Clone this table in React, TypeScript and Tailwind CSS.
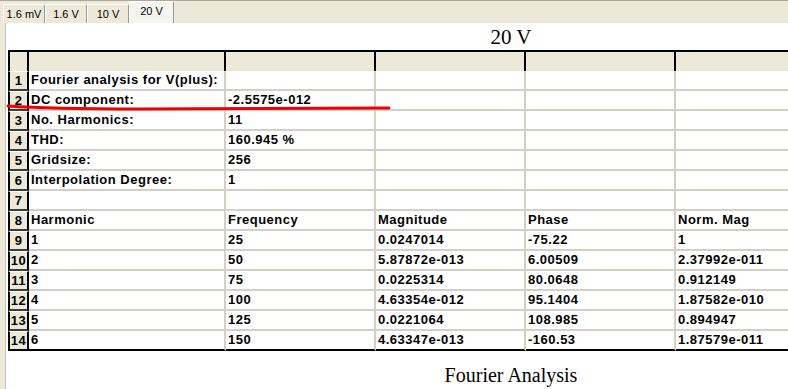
import React from "react";

const tabs = ["1.6 mV", "1.6 V", "10 V", "20 V"];

const rows: string[][] = [
    ["Fourier analysis for V(plus):", "", "", "", ""],
    ["DC component:", "-2.5575e-012", "", "", ""],
    ["No. Harmonics:", "11", "", "", ""],
    ["THD:", "160.945 %", "", "", ""],
    ["Gridsize:", "256", "", "", ""],
    ["Interpolation Degree:", "1", "", "", ""],
    ["", "", "", "", ""],
    ["Harmonic", "Frequency", "Magnitude", "Phase", "Norm. Mag"],
    ["1", "25", "0.0247014", "-75.22", "1"],
    ["2", "50", "5.87872e-013", "6.00509", "2.37992e-011"],
    ["3", "75", "0.0225314", "80.0648", "0.912149"],
    ["4", "100", "4.63354e-012", "95.1404", "1.87582e-010"],
    ["5", "125", "0.0221064", "108.985", "0.894947"],
    ["6", "150", "4.63347e-013", "-160.53", "1.87579e-011"],
];

const colWidths = ["w-[197px]", "w-[150px]", "w-[150px]", "w-[150px]", "w-[150px]"];

const TabBar = () => (
    <div className="h-[23px] shrink-0 flex items-end pl-[3px] border-t border-[#aca899]">
        {tabs.map((tab, i) =>
            i === tabs.length - 1 ? (
                <div
                    key={tab}
                    className="h-[22px] w-[45px] flex justify-center pt-[3px] bg-[#f5f4ef] border-t border-l border-white border-r border-r-[#919b9c] rounded-t-[2px] text-[11px] leading-[13px]"
                >
                    {tab}
                </div>
            ) : (
                <div
                    key={tab}
                    className="h-[19px] w-[42px] flex items-center justify-center bg-[#ece9d8] border-t border-l border-white border-r border-r-[#919b9c] rounded-t-[2px] text-[11px]"
                >
                    {tab}
                </div>
            )
        )}
    </div>
);

const GridRow = ({ num, cells, last }: { num: number; cells: string[]; last: boolean }) => (
    <div className="flex h-[20px]">
        <div
            className={
                "w-[21px] shrink-0 flex items-center justify-center bg-[#ece9d8] border-l-2 border-r-2 border-black border-t border-t-white border-b-2 " +
                (last ? "border-b-black" : "border-b-[#3c3c3c]")
            }
        >
            {num}
        </div>
        {cells.map((c, i) => (
            <div
                key={i}
                className={
                    colWidths[i] +
                    " shrink-0 flex items-center pl-[2px] whitespace-nowrap overflow-hidden border-r-2 border-r-[#d4d0c8] border-b-2 " +
                    (last ? "border-b-black" : "border-b-[#d4d0c8]")
                }
            >
                {c}
            </div>
        ))}
    </div>
);

const Grid = () => (
    <div
        className="ml-[2px] w-[818px] shrink-0 flex flex-col font-bold text-[13px] tracking-[0.5px] text-black"
        style={{ fontFamily: '"Liberation Sans", Arial, sans-serif' }}
    >
        <div className="flex h-[21px] border-t-2 border-black">
            <div className="w-[21px] shrink-0 bg-[#ece9d8] border-l-2 border-r-2 border-black" />
            {colWidths.map((w, i) => (
                <div key={i} className={w + " shrink-0 bg-[#ece9d8] border-r-2 border-black"} />
            ))}
        </div>
        {rows.map((r, i) => (
            <GridRow key={i} num={i + 1} cells={r} last={i === rows.length - 1} />
        ))}
    </div>
);

const RedMark = () => (
    <svg className="absolute left-0 top-0 pointer-events-none" width="788" height="389">
        <path
            d="M8,106 Q50,109 140,109 L389,108"
            fill="none"
            stroke="#f00000"
            strokeWidth="3"
            strokeLinecap="round"
        />
    </svg>
);

export default function App() {
    return (
        <div
            className="relative w-[788px] h-[389px] overflow-hidden bg-[#ece9d8] flex flex-col text-black"
            style={{ fontFamily: '"Liberation Sans", Arial, sans-serif' }}
        >
            <TabBar />
            <div className="flex-1 ml-[5px] bg-white border-l border-[#c4c1b4] flex flex-col overflow-hidden">
                <div
                    className="w-[1010px] shrink-0 h-[27px] text-center text-[21px] leading-[26px] pt-[1px]"
                    style={{ fontFamily: '"Liberation Serif", "Times New Roman", serif' }}
                >
                    20 V
                </div>
                <Grid />
                <div
                    className="w-[1010px] shrink-0 mt-[11px] text-center text-[20px] leading-[26px]"
                    style={{ fontFamily: '"Liberation Serif", "Times New Roman", serif' }}
                >
                    Fourier Analysis
                </div>
            </div>
            <RedMark />
        </div>
    );
}
